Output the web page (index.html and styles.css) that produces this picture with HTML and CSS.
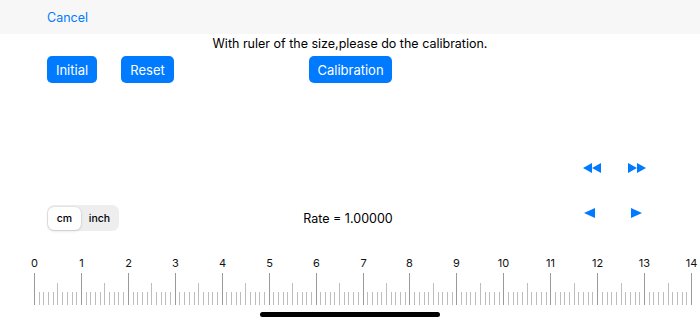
FILE: index.html
```html
<!DOCTYPE html>
<html lang="en">
<head>
<meta charset="utf-8">
<title>Calibration</title>
<link rel="stylesheet" href="styles.css">
</head>
<body>
<div class="nav"><span class="cancel">Cancel</span></div>
<div class="title">With ruler of the size,please do the calibration.</div>
<div class="buttons">
  <button class="btn btn-initial">Initial</button>
  <button class="btn btn-reset">Reset</button>
  <button class="btn btn-calib">Calibration</button>
</div>
<div class="fastrow">
  <svg class="icon-fast" width="18" height="10" viewBox="0 0 18 10"><polygon points="9,0 0,5 9,10"/><polygon points="18,0 9,5 18,10"/></svg>
  <svg class="icon-fast" width="18" height="10" viewBox="0 0 18 10"><polygon points="0,0 9,5 0,10"/><polygon points="9,0 18,5 9,10"/></svg>
</div>
<div class="controlrow">
  <div class="seg-wrap">
    <div class="seg">
      <span class="seg-item seg-on">cm</span>
      <span class="seg-item">inch</span>
    </div>
  </div>
  <div class="rate">Rate = 1.00000</div>
  <div class="steps">
    <svg width="11" height="10" viewBox="0 0 11 10"><polygon points="11,0 0,5 11,10"/></svg>
    <svg width="11" height="10" viewBox="0 0 11 10"><polygon points="0,0 11,5 0,10"/></svg>
  </div>
</div>
<svg class="ruler" id="ruler" width="700" height="57" viewBox="0 0 700 57"></svg>
<div class="home"></div>
<script src="script.js"></script>
</body>
</html>
```
FILE: styles.css
```css
html, body {
  margin: 0;
  padding: 0;
  background: #ffffff;
}
body {
  width: 700px;
  height: 323px;
  overflow: hidden;
  font-family: "Inter", "Roboto", "Liberation Sans", sans-serif;
  color: #000;
}
.nav {
  height: 34px;
  background: #f7f7f7;
  display: flex;
  align-items: center;
  padding-left: 47px;
}
.cancel {
  color: #007aff;
  font-size: 12.5px;
}
.title {
  padding-top: 1px;
  line-height: 17px;
  font-size: 12.5px;
  text-align: center;
}
.buttons {
  margin-top: 4px;
  display: flex;
  padding-left: 47px;
  height: 27px;
}
.btn {
  height: 27px;
  border: none;
  border-radius: 5px;
  background: #007aff;
  color: #fff;
  font-family: inherit;
  font-size: 13px;
  padding: 0;
  margin: 0;
}
.btn-initial { width: 50px; }
.btn-reset { width: 53px; margin-left: 24px; }
.btn-calib { width: 83px; margin-left: 135px; }
.fastrow {
  margin-top: 80px;
  height: 10px;
  display: flex;
  justify-content: flex-end;
  gap: 27px;
  padding-right: 54px;
}
.fastrow svg, .steps svg {
  fill: #007aff;
  display: block;
}
.controlrow {
  margin-top: 32px;
  height: 26px;
  display: grid;
  grid-template-columns: 1fr auto 1fr;
  align-items: center;
}
.seg-wrap {
  padding-left: 47px;
}
.seg {
  width: 72px;
  height: 26px;
  box-sizing: border-box;
  background: #eeeeef;
  border-radius: 7px;
  display: flex;
  align-items: center;
  padding: 1px;
}
.seg-item {
  font-size: 10.5px;
  font-weight: 500;
  color: #000;
  display: flex;
  align-items: center;
  justify-content: center;
  height: 23px;
}
.seg-on {
  width: 33px;
  background: #fff;
  border-radius: 6px;
  box-shadow: 0 1px 3px rgba(0,0,0,0.15), 0 0 0 0.5px rgba(0,0,0,0.05);
}
.seg-item + .seg-item {
  flex: 1;
}
.rate {
  font-size: 12.5px;
  padding-right: 4px;
  padding-top: 1px;
}
.steps {
  align-self: start;
  margin-top: 3px;
  display: flex;
  justify-content: flex-end;
  gap: 36px;
  padding-right: 58px;
}
.ruler {
  display: block;
  margin-top: 19px;
}
.ruler text {
  font-family: "Inter", "Roboto", "Liberation Sans", sans-serif;
  font-size: 11px;
  fill: #111;
}
.home {
  margin: 5px auto 0;
  width: 180px;
  height: 5px;
  border-radius: 3px;
  background: #000;
}
```
FILE: script.js
```js
(function () {
  var svg = document.getElementById('ruler');
  var ns = 'http://www.w3.org/2000/svg';
  for (var i = 0; i <= 140; i++) {
    var x = 34 + Math.round(i * 4.693) + 0.5;
    var line = document.createElementNS(ns, 'line');
    var top, color;
    if (i % 10 === 0) { top = 23; color = '#9a9a9a'; }
    else if (i % 5 === 0) { top = 33; color = '#bdbdbd'; }
    else { top = 42; color = '#bdbdbd'; }
    line.setAttribute('x1', x);
    line.setAttribute('x2', x);
    line.setAttribute('y1', top);
    line.setAttribute('y2', 55);
    line.setAttribute('stroke', color);
    line.setAttribute('stroke-width', '1');
    svg.appendChild(line);
    if (i % 10 === 0) {
      var t = document.createElementNS(ns, 'text');
      t.setAttribute('x', x);
      t.setAttribute('y', 17);
      t.setAttribute('text-anchor', 'middle');
      t.textContent = String(i / 10);
      svg.appendChild(t);
    }
  }
})();
```
